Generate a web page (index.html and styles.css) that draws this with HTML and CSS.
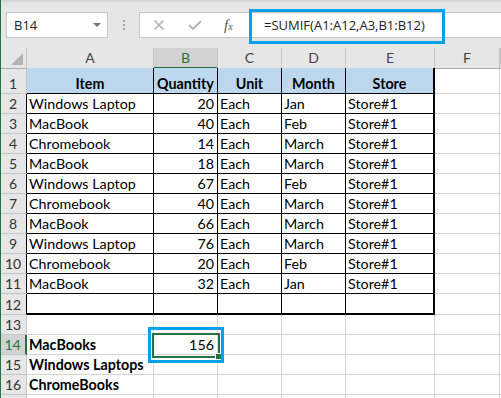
FILE: index.html
```html
<!DOCTYPE html>
<html lang="en">
<head>
  <meta charset="UTF-8" />
  <title>SUMIF example</title>
  <link rel="stylesheet" href="styles.css">
</head>
<body>
  <div class="app">
    <div class="toolbar">
      <div class="namebox"><span>B14</span><span class="caret"></span></div>
      <div class="grip"><i></i><i></i><i></i></div>
      <div class="formula">
        <div class="tools">
          <svg class="icon" width="12" height="10" viewBox="0 0 12 10"><path d="M1.5 0.5 L10.5 9.5 M10.5 0.5 L1.5 9.5" stroke="#b3b3b3" stroke-width="1.6" fill="none"/></svg>
          <svg class="icon" width="14" height="10" viewBox="0 0 14 10"><path d="M1 5 L5 9 L13 1" stroke="#b3b3b3" stroke-width="1.8" fill="none"/></svg>
          <span class="fx">f<sub>x</sub></span>
        </div>
        <div class="input">=SUMIF(A1:A12,A3,B1:B12)</div>
      </div>
    </div>

    <div class="sheet">
      <div class="row head">
        <div class="corner"><span class="tri"></span></div>
        <div class="ch">A</div>
        <div class="ch active">B</div>
        <div class="ch">C</div>
        <div class="ch">D</div>
        <div class="ch">E</div>
        <div class="ch">F</div>
        <div class="ch"></div>
      </div>
      <div class="row r1">
        <div class="rh">1</div>
        <div class="c t hd">Item</div>
        <div class="c t hd">Quantity</div>
        <div class="c t hd">Unit</div>
        <div class="c t hd">Month</div>
        <div class="c t hd last">Store</div>
        <div class="c"></div>
        <div class="c"></div>
      </div>
      <div class="row">
        <div class="rh tb">2</div>
        <div class="c t">Windows Laptop</div><div class="c t n">20</div><div class="c t">Each</div><div class="c t">Jan</div><div class="c t last">Store#1</div><div class="c"></div><div class="c"></div>
      </div>
      <div class="row">
        <div class="rh tb">3</div>
        <div class="c t">MacBook</div><div class="c t n">40</div><div class="c t">Each</div><div class="c t">Feb</div><div class="c t last">Store#1</div><div class="c"></div><div class="c"></div>
      </div>
      <div class="row">
        <div class="rh tb">4</div>
        <div class="c t">Chromebook</div><div class="c t n">14</div><div class="c t">Each</div><div class="c t">March</div><div class="c t last">Store#1</div><div class="c"></div><div class="c"></div>
      </div>
      <div class="row">
        <div class="rh tb">5</div>
        <div class="c t">MacBook</div><div class="c t n">18</div><div class="c t">Each</div><div class="c t">March</div><div class="c t last">Store#1</div><div class="c"></div><div class="c"></div>
      </div>
      <div class="row">
        <div class="rh tb">6</div>
        <div class="c t">Windows Laptop</div><div class="c t n">67</div><div class="c t">Each</div><div class="c t">Feb</div><div class="c t last">Store#1</div><div class="c"></div><div class="c"></div>
      </div>
      <div class="row">
        <div class="rh tb">7</div>
        <div class="c t">Chromebook</div><div class="c t n">40</div><div class="c t">Each</div><div class="c t">March</div><div class="c t last">Store#1</div><div class="c"></div><div class="c"></div>
      </div>
      <div class="row">
        <div class="rh tb">8</div>
        <div class="c t">MacBook</div><div class="c t n">66</div><div class="c t">Each</div><div class="c t">March</div><div class="c t last">Store#1</div><div class="c"></div><div class="c"></div>
      </div>
      <div class="row">
        <div class="rh tb">9</div>
        <div class="c t">Windows Laptop</div><div class="c t n">76</div><div class="c t">Each</div><div class="c t">March</div><div class="c t last">Store#1</div><div class="c"></div><div class="c"></div>
      </div>
      <div class="row">
        <div class="rh tb">10</div>
        <div class="c t">Chromebook</div><div class="c t n">20</div><div class="c t">Each</div><div class="c t">Feb</div><div class="c t last">Store#1</div><div class="c"></div><div class="c"></div>
      </div>
      <div class="row">
        <div class="rh tb">11</div>
        <div class="c t">MacBook</div><div class="c t n">32</div><div class="c t">Each</div><div class="c t">Jan</div><div class="c t last">Store#1</div><div class="c"></div><div class="c"></div>
      </div>
      <div class="row r12">
        <div class="rh tb">12</div>
        <div class="c t"></div><div class="c t"></div><div class="c t"></div><div class="c t"></div><div class="c t last"></div><div class="c"></div><div class="c"></div>
      </div>
      <div class="row">
        <div class="rh">13</div>
        <div class="c"></div><div class="c"></div><div class="c"></div><div class="c"></div><div class="c"></div><div class="c"></div><div class="c"></div>
      </div>
      <div class="row">
        <div class="rh active">14</div>
        <div class="c b">MacBooks</div><div class="c n">156</div><div class="c"></div><div class="c"></div><div class="c"></div><div class="c"></div><div class="c"></div>
      </div>
      <div class="row">
        <div class="rh">15</div>
        <div class="c b">Windows Laptops</div><div class="c"></div><div class="c"></div><div class="c"></div><div class="c"></div><div class="c"></div><div class="c"></div>
      </div>
      <div class="row">
        <div class="rh">16</div>
        <div class="c b">ChromeBooks</div><div class="c"></div><div class="c"></div><div class="c"></div><div class="c"></div><div class="c"></div><div class="c"></div>
      </div>
      <div class="row">
        <div class="rh"></div>
        <div class="c"></div><div class="c"></div><div class="c"></div><div class="c"></div><div class="c"></div><div class="c"></div><div class="c"></div>
      </div>
    </div>

    <!-- selection and the two blue call-outs -->
    <div class="selection"><span class="handle"></span></div>
    <div class="callout cell-callout"></div>
    <div class="callout bar-callout"></div>
  </div>
</body>
</html>
```

FILE: styles.css
```css
body {
  margin: 0;
  font-family: Lato, 'Open Sans', sans-serif;
  color: #000;
  background: #fff;
}
.app {
  position: relative;
  width: 501px;
  height: 398px;
  overflow: hidden;
  background: #fff;
}
.app::before {
  content: '';
  position: absolute;
  left: 0;
  top: 0;
  bottom: 0;
  width: 1px;
  background: #217346;
  z-index: 5;
}

/* toolbar */
.toolbar {
  height: 48px;
  box-sizing: border-box;
  padding: 12px 0 0 6px;
  display: flex;
  align-items: flex-start;
  background: linear-gradient(#cfcfcf, #e6e6e6 3px, #e6e6e6);
  font-family: 'Open Sans', sans-serif;
}
.namebox {
  width: 102px;
  height: 26px;
  box-sizing: border-box;
  background: #fff;
  border: 1px solid #c6c6c6;
  display: flex;
  align-items: center;
  justify-content: space-between;
  padding: 0 6px 0 7px;
  font-size: 13px;
  color: #222;
}
.caret {
  width: 0;
  height: 0;
  border-left: 4px solid transparent;
  border-right: 4px solid transparent;
  border-top: 4px solid #777;
}
.grip {
  width: 31px;
  height: 26px;
  display: flex;
  flex-direction: column;
  align-items: center;
  justify-content: center;
  gap: 2px;
}
.grip i {
  width: 2px;
  height: 2px;
  background: #a6a6a6;
}
.formula {
  flex: 1;
  height: 26px;
  display: flex;
  background: #fff;
  border: 1px solid #c6c6c6;
  border-right: none;
  box-sizing: border-box;
}
.tools {
  width: 110px;
  flex-shrink: 0;
  box-sizing: border-box;
  display: flex;
  align-items: center;
  padding-left: 13px;
  gap: 23px;
  border-right: 1px solid #e1e1e1;
}
.fx {
  font-family: 'Liberation Serif', serif;
  font-style: italic;
  font-size: 15px;
  color: #555;
  margin-left: -1px;
}
.fx sub {
  font-size: 10px;
  vertical-align: 0;
}
.input {
  padding-left: 14px;
  font-size: 13px;
  line-height: 24px;
  color: #222;
  white-space: nowrap;
}

/* sheet grid */
.row {
  display: grid;
  grid-template-columns: 27px 127px 64px 64px 64px 89px 65px 1fr;
  height: 20px;
}
.row > div {
  box-sizing: border-box;
  border-right: 1px solid #d4d4d4;
  border-bottom: 1px solid #d4d4d4;
}
.row.r1 {
  height: 26px;
}
.row.r12 {
  height: 21px;
}
.head > div {
  background: #e6e6e6;
  border-right-color: #c6c6c6;
  border-bottom-color: #ababab;
  color: #444;
  font-size: 14px;
  text-align: center;
  line-height: 19px;
}
.head > .active {
  background: #d2d2d2;
  color: #217346;
  border-bottom: 2px solid #217346;
}
.corner {
  position: relative;
}
.tri {
  position: absolute;
  right: 3px;
  bottom: 3px;
  width: 0;
  height: 0;
  border-left: 12px solid transparent;
  border-bottom: 12px solid #b4b4b4;
}
.rh {
  background: #e6e6e6;
  border-right-color: #c6c6c6 !important;
  border-bottom-color: #c6c6c6 !important;
  color: #333;
  font-size: 14px;
  display: flex;
  align-items: flex-end;
  justify-content: center;
  padding-bottom: 1px;
  line-height: 16px;
}
.rh.tb {
  border-right-color: #000 !important;
}
.rh.active {
  background: #d2d2d2;
  color: #217346;
  border-right: 2px solid #217346 !important;
}
.c {
  font-size: 14.3px;
  display: flex;
  align-items: flex-end;
  padding: 0 2px 1px 2px;
  line-height: 16px;
  white-space: nowrap;
}
.c.t {
  border-right-color: #000;
  border-bottom-color: #000;
}
.c.last {
  border-right: 2px solid #000;
}
.r12 .c.t {
  border-bottom: 2px solid #000;
}
.c.hd {
  background: #bdd7ee;
  font-weight: bold;
  justify-content: center;
}
.c.n {
  justify-content: flex-end;
  padding-right: 3px;
}
.c.b {
  font-weight: bold;
}

/* overlays */
.selection {
  position: absolute;
  left: 152px;
  top: 333px;
  width: 68px;
  height: 25px;
  box-sizing: border-box;
  border: 2px solid #217346;
}
.handle {
  position: absolute;
  right: -4px;
  bottom: -4px;
  width: 5px;
  height: 5px;
  background: #217346;
  border: 1px solid #fff;
}
.callout {
  position: absolute;
  box-sizing: border-box;
  border: 3px solid #00a2e8;
}
.cell-callout {
  left: 148px;
  top: 327px;
  width: 76px;
  height: 36px;
}
.bar-callout {
  left: 249px;
  top: 9px;
  width: 196px;
  height: 35px;
}
```
